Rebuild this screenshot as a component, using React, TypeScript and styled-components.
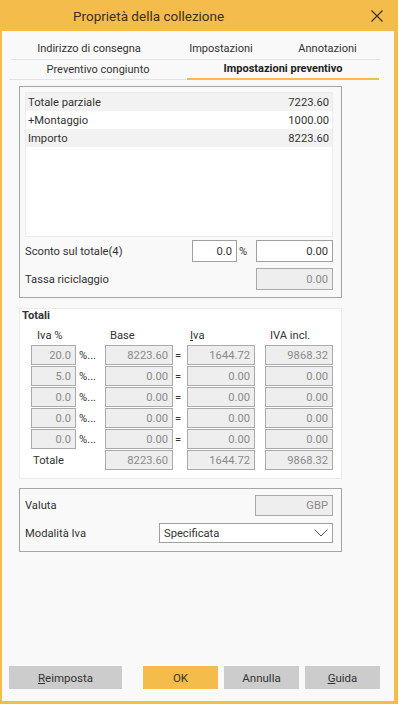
import React from "react";
import styled, { createGlobalStyle } from "styled-components";

const ORANGE = "#f4bd4b";
const FONT = `Roboto, "Liberation Sans", Arial, sans-serif`;

const Global = createGlobalStyle`
  html, body { margin: 0; padding: 0; background: #ffffff; }
  body { font-family: ${FONT}; font-size: 11.2px; color: #333333; }
  * { box-sizing: border-box; }
`;

const Window = styled.div`
  width: 398px;
  height: 704px;
  display: flex;
  flex-direction: column;
  border-left: 2px solid ${ORANGE};
  border-right: 4px solid ${ORANGE};
  border-bottom: 3px solid ${ORANGE};
  background: #f9f9f9;
`;

const TitleBar = styled.div`
  height: 31px;
  flex: none;
  background: ${ORANGE};
  display: flex;
  align-items: center;
  justify-content: space-between;
  padding-left: 71px;
`;

const Title = styled.div`
  font-size: 13.5px;
  color: #3b3024;
  line-height: 18px;
`;

const CloseButton = styled.div`
  width: 30px;
  height: 31px;
  margin-right: 2px;
  display: flex;
  align-items: center;
  justify-content: center;
`;

const TabRow = styled.div<{ $top?: boolean }>`
  display: flex;
  flex: none;
  margin-left: ${(p) => (p.$top ? 9 : 7)}px;
  ${(p) =>
    p.$top
      ? `width: 369px; height: 29px; border-bottom: 1px solid #e4e4e4;`
      : `height: 20px;`}
`;

const Tab = styled.div<{ $w: number; $active?: boolean; $line?: boolean }>`
  width: ${(p) => p.$w}px;
  text-align: center;
  color: ${(p) => (p.$active ? "#222222" : "#333333")};
  font-size: 11px;
  font-weight: ${(p) => (p.$active ? 700 : 400)};
  ${(p) =>
    p.$line
      ? `height: 20px; line-height: ${p.$active ? 18 : 19}px; border-bottom: ${
          p.$active ? `2px solid ${ORANGE}` : "1px solid #e4e4e4"
        };`
      : `padding-top: 10px; line-height: 16px;`}
`;

const Content = styled.div`
  flex: 1;
  display: flex;
  flex-direction: column;
  padding-left: 17px;
`;

const Panel = styled.div<{ $light?: boolean; $mt: number }>`
  width: 323px;
  margin-top: ${(p) => p.$mt}px;
  border: 1px solid ${(p) => (p.$light ? "#ebebeb" : "#a6a6a6")};
  background: ${(p) => (p.$light ? "#ffffff" : "transparent")};
`;

const SummaryPanel = styled(Panel)`
  padding: 5px 8px 7px 5px;
`;

const List = styled.div`
  height: 145px;
  border: 1px solid #ececec;
  background: #ffffff;
`;

const ListRow = styled.div<{ $shade?: boolean }>`
  height: 18px;
  display: flex;
  align-items: center;
  justify-content: space-between;
  padding: 0 3px 0 2px;
  background: ${(p) => (p.$shade ? "#f2f2f2" : "#ffffff")};
`;

const FieldRow = styled.div<{ $mt: number; $h?: number }>`
  display: flex;
  align-items: center;
  height: ${(p) => p.$h ?? 22}px;
  margin-top: ${(p) => p.$mt}px;
`;

const Label = styled.div`
  flex: 1;
`;

const Box = styled.div<{ $w: number; $disabled?: boolean; $h?: number }>`
  width: ${(p) => p.$w}px;
  height: ${(p) => p.$h ?? 22}px;
  border: 1px solid ${(p) => (p.$disabled ? "#a9a9a9" : "#a0a0a0")};
  background: ${(p) => (p.$disabled ? "#eeeeee" : "#ffffff")};
  color: ${(p) => (p.$disabled ? "#8a8a8a" : "#333333")};
  display: flex;
  align-items: center;
  justify-content: flex-end;
  padding-right: 4px;
`;

const Percent = styled.div`
  width: 19px;
  padding-left: 2px;
`;

const TotalsPanel = styled(Panel)`
  height: 171px;
  padding: 0 0 7px 0;
`;

const TotalsTitle = styled.div`
  font-weight: 700;
  line-height: 14px;
  padding-left: 2px;
`;

const Grid = styled.div`
  display: grid;
  grid-template-columns: 11px 45px 29px 68px 14px 68px 10px 68px;
  grid-template-rows: 16px repeat(6, 21px);
  margin-top: 6px;
`;

const Head = styled.div<{ $col: number; $pl: number }>`
  grid-column: ${(p) => p.$col};
  grid-row: 1;
  padding-left: ${(p) => p.$pl}px;
  line-height: 14px;
  white-space: nowrap;
`;

const Cell = styled.div<{ $col: number; $row: number }>`
  grid-column: ${(p) => p.$col};
  grid-row: ${(p) => p.$row};
  height: 20px;
  border: 1px solid #a9a9a9;
  background: #eeeeee;
  color: #8a8a8a;
  display: flex;
  align-items: center;
  justify-content: flex-end;
  padding-right: 4px;
`;

const Sym = styled.div<{ $col: number; $row: number; $pl: number }>`
  grid-column: ${(p) => p.$col};
  grid-row: ${(p) => p.$row};
  padding-left: ${(p) => p.$pl}px;
  display: flex;
  align-items: center;
  white-space: nowrap;
`;

const TotaleLabel = styled.div`
  grid-column: 1 / span 3;
  grid-row: 7;
  padding-left: 13px;
  display: flex;
  align-items: center;
`;

const OptionsPanel = styled(Panel)`
  padding: 6px 8px 8px 5px;
`;

const Select = styled.div`
  width: 174px;
  height: 20px;
  border: 1px solid #a0a0a0;
  background: #ffffff;
  display: flex;
  align-items: center;
  justify-content: space-between;
  padding: 0 4px 0 4px;
`;

const ButtonBar = styled.div`
  flex: none;
  display: flex;
  padding-left: 7px;
  margin-bottom: 12px;
  margin-top: auto;
`;

const Button = styled.div<{ $w: number; $ml: number; $primary?: boolean }>`
  width: ${(p) => p.$w}px;
  height: 23px;
  margin-left: ${(p) => p.$ml}px;
  background: ${(p) => (p.$primary ? ORANGE : "#cccccc")};
  color: #333333;
  font-size: 11.5px;
  display: flex;
  align-items: center;
  justify-content: center;
`;

const rates = [
  ["20.0", "8223.60", "1644.72", "9868.32"],
  ["5.0", "0.00", "0.00", "0.00"],
  ["0.0", "0.00", "0.00", "0.00"],
  ["0.0", "0.00", "0.00", "0.00"],
  ["0.0", "0.00", "0.00", "0.00"],
];

export default function App() {
  return (
    <>
      <Global />
      <Window>
        <TitleBar>
          <Title>Proprietà della collezione</Title>
          <CloseButton>
            <svg width="12" height="12" viewBox="0 0 12 12">
              <path d="M0.5 0.5 L11.5 11.5 M11.5 0.5 L0.5 11.5" stroke="#3b3024" strokeWidth="1.1" fill="none" />
            </svg>
          </CloseButton>
        </TitleBar>

        <TabRow $top>
          <Tab $w={156}>Indirizzo di consegna</Tab>
          <Tab $w={108}>Impostazioni</Tab>
          <Tab $w={105}>Annotazioni</Tab>
        </TabRow>
        <TabRow>
          <Tab $w={178} $line>Preventivo congiunto</Tab>
          <Tab $w={192} $line $active>Impostazioni preventivo</Tab>
        </TabRow>

        <Content>
          <SummaryPanel $mt={6}>
            <List>
              <ListRow $shade>
                <span>Totale parziale</span>
                <span>7223.60</span>
              </ListRow>
              <ListRow>
                <span>+Montaggio</span>
                <span>1000.00</span>
              </ListRow>
              <ListRow $shade>
                <span>Importo</span>
                <span>8223.60</span>
              </ListRow>
            </List>
            <FieldRow $mt={3}>
              <Label>Sconto sul totale(4)</Label>
              <Box $w={45}>0.0</Box>
              <Percent>%</Percent>
              <Box $w={77}>0.00</Box>
            </FieldRow>
            <FieldRow $mt={6}>
              <Label>Tassa riciclaggio</Label>
              <Box $w={77} $disabled>0.00</Box>
            </FieldRow>
          </SummaryPanel>

          <TotalsPanel $mt={10} $light>
            <TotalsTitle>Totali</TotalsTitle>
            <Grid>
              <Head $col={2} $pl={6}>Iva %</Head>
              <Head $col={4} $pl={5}>Base</Head>
              <Head $col={6} $pl={3}><u>I</u>va</Head>
              <Head $col={8} $pl={5}>IVA incl.</Head>
              {rates.map((r, i) => (
                <React.Fragment key={i}>
                  <Cell $col={2} $row={i + 2}>{r[0]}</Cell>
                  <Sym $col={3} $row={i + 2} $pl={3}>%...</Sym>
                  <Cell $col={4} $row={i + 2}>{r[1]}</Cell>
                  <Sym $col={5} $row={i + 2} $pl={2}>=</Sym>
                  <Cell $col={6} $row={i + 2}>{r[2]}</Cell>
                  <Cell $col={8} $row={i + 2}>{r[3]}</Cell>
                </React.Fragment>
              ))}
              <TotaleLabel>Totale</TotaleLabel>
              <Cell $col={4} $row={7}>8223.60</Cell>
              <Cell $col={6} $row={7}>1644.72</Cell>
              <Cell $col={8} $row={7}>9868.32</Cell>
            </Grid>
          </TotalsPanel>

          <OptionsPanel $mt={9}>
            <FieldRow $mt={0} $h={21}>
              <Label>Valuta</Label>
              <Box $w={78} $h={21} $disabled>GBP</Box>
            </FieldRow>
            <FieldRow $mt={7} $h={20}>
              <Label>Modalità Iva</Label>
              <Select>
                <span>Specificata</span>
                <svg width="14" height="8" viewBox="0 0 14 8">
                  <path d="M0.5 0.5 L7 7 L13.5 0.5" stroke="#555555" strokeWidth="1" fill="none" />
                </svg>
              </Select>
            </FieldRow>
          </OptionsPanel>
        </Content>

        <ButtonBar>
          <Button $w={113} $ml={0}><u>R</u>eimposta</Button>
          <Button $w={75} $ml={21} $primary>OK</Button>
          <Button $w={75} $ml={6}>Annulla</Button>
          <Button $w={75} $ml={6}><u>G</u>uida</Button>
        </ButtonBar>
      </Window>
    </>
  );
}
